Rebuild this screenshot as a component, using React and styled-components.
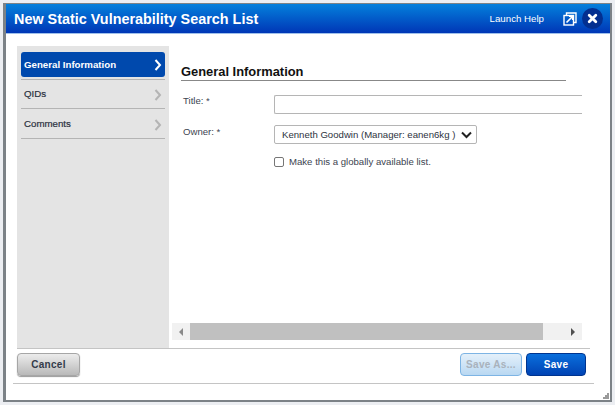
import React from 'react';
import styled, { createGlobalStyle } from 'styled-components';

const GlobalStyle = createGlobalStyle`
  html, body {
    margin: 0;
    padding: 0;
    background: #eceef2;
    font-family: "Liberation Sans", Arial, sans-serif;
  }
`;

const Page = styled.div`
  width: 615px;
  height: 405px;
  box-sizing: border-box;
  padding: 3px 0 0 3px;
  overflow: hidden;
`;

const Dialog = styled.div`
  position: relative;
  width: 609px;
  height: 399px;
  box-sizing: border-box;
  border: 2px solid #7c8287;
  border-top-width: 1px;
  border-left-width: 3px;
  background: #fff;
  display: flex;
  flex-direction: column;
`;

const Header = styled.div`
  height: 29px;
  flex: none;
  display: flex;
  align-items: center;
  padding: 0 7px 0 8px;
  color: #fff;
  background: linear-gradient(#0480dc, #0036b6);
  border-bottom: 1px solid #9fc0ea;
  box-sizing: content-box;
`;

const Title = styled.div`
  flex: 1;
  font-size: 14.4px;
  font-weight: bold;
`;

const HelpLink = styled.a`
  font-size: 9.7px;
  color: #fff;
  margin-right: 19px;
`;

const PopOut = styled.svg`
  width: 14px;
  height: 14px;
  margin-right: 5px;
`;

const CloseButton = styled.button`
  width: 21px;
  height: 21px;
  padding: 0;
  border: none;
  border-radius: 50%;
  background: #032f90;
  display: flex;
  align-items: center;
  justify-content: center;
`;

const Main = styled.div`
  display: flex;
  height: 302px;
  margin: 12px 20px 0 11px;
  border-bottom: 1px solid #c4c4c4;
  flex: none;
  width: 573px;
`;

const Sidebar = styled.nav`
  width: 152px;
  flex: none;
  box-sizing: border-box;
  background: #e4e4e4;
  padding: 6px 4px 0;
`;

const NavItem = styled.div`
  height: ${p => (p.$active ? '25px' : '28px')};
  margin-bottom: ${p => (p.$active ? '2px' : '0')};
  padding: ${p => (p.$active ? '0 4px 0 3px' : '0 4px 1px 3px')};
  box-sizing: border-box;
  border-radius: 3px;
  display: flex;
  align-items: center;
  justify-content: space-between;
  font-size: 9.7px;
  font-weight: ${p => (p.$active ? 'bold' : 'normal')};
  color: ${p => (p.$active ? '#fff' : '#2b3140')};
  background: ${p => (p.$active ? '#0049ad' : 'transparent')};
  -webkit-text-stroke: ${p => (p.$active ? '0' : '0.2px #2b3140')};
`;

const NavRule = styled.div`
  height: 1px;
  background: #b4b4b4;
  margin-bottom: ${p => p.$gap || 0}px;
`;

const Chevron = styled.svg`
  width: 8px;
  height: 12px;
  margin: ${p => p.$drop}px -1px 0 0;
`;

const Content = styled.div`
  flex: 1;
  min-width: 0;
  display: flex;
  flex-direction: column;
  padding: 0 0 8px 3px;
`;

const Form = styled.div`
  flex: 1;
  padding: 19px 0 0 9px;
`;

const Heading = styled.h2`
  width: 385px;
  margin: 0;
  font-size: 12.9px;
  font-weight: bold;
  line-height: 14px;
  padding-bottom: 1px;
  color: #111;
  border-bottom: 1px solid #888;
`;

const Row = styled.div`
  display: flex;
  align-items: flex-start;
  margin-top: ${p => p.$top}px;
  padding-left: 2px;
`;

const Label = styled.label`
  width: 91px;
  flex: none;
  font-size: 9.6px;
  line-height: 12px;
  padding-top: ${p => p.$pad || 0}px;
  color: #3d4450;
`;

const TextInput = styled.div`
  width: 308px;
  height: 19px;
  box-sizing: border-box;
  border: 1px solid #b5b5b5;
  border-right: none;
  border-radius: 2px 0 0 2px;
  background: #fff;
`;

const Select = styled.div`
  width: 203px;
  height: 19px;
  box-sizing: border-box;
  border: 1px solid #b5b5b5;
  border-radius: 2px;
  padding: 0 4px 0 7px;
  display: flex;
  align-items: center;
  justify-content: space-between;
  font-size: 9.6px;
  white-space: nowrap;
  color: #2d3340;
`;

const CheckRow = styled.div`
  display: flex;
  align-items: center;
  margin: 12px 0 0 93px;
  font-size: 9.6px;
  color: #3d4450;
`;

const CheckBox = styled.span`
  width: 10px;
  height: 10px;
  box-sizing: border-box;
  border: 1px solid #767676;
  border-radius: 2px;
  background: #fff;
  margin-right: 5px;
`;

const ScrollBar = styled.div`
  height: 17px;
  display: flex;
  align-items: center;
  background: #f1f1f1;
  width: 410px;
  flex: none;
`;

const ScrollButton = styled.div`
  width: 18px;
  flex: none;
  display: flex;
  align-items: center;
  justify-content: center;
`;

const ScrollTrack = styled.div`
  flex: 1;
  height: 100%;
`;

const ScrollThumb = styled.div`
  width: 353px;
  height: 100%;
  background: #c0c0c0;
`;

const Footer = styled.div`
  display: flex;
  align-items: center;
  width: 569px;
  margin: 4px 0 0 11px;
  height: 23px;
  flex: none;
`;

const Spacer = styled.div`
  flex: 1;
`;

const Btn = styled.button`
  width: ${p => p.$w}px;
  height: 23px;
  margin-left: ${p => p.$ml || 0}px;
  box-sizing: border-box;
  padding: 0;
  border-radius: 4px;
  font-family: "Liberation Sans", Arial, sans-serif;
  font-size: 10px;
  font-weight: bold;
  letter-spacing: 0.3px;
  ${p => p.$variant === 'primary' && `
    color: #fff;
    border: 1px solid #00348f;
    background: linear-gradient(#0a6fdc, #0043b4);
  `}
  ${p => p.$variant === 'disabled' && `
    color: #a9b2bc;
    border: 1px solid #7db4e4;
    background: linear-gradient(#e4f0fa, #b9d8f2);
  `}
  ${p => p.$variant === 'plain' && `
    color: #333b4a;
    border: 1px solid #a6a6a6;
    background: linear-gradient(#ececec, #b9b9b9);
    box-shadow: 0 1px 1px #999;
  `}
`;

const BottomRule = styled.div`
  height: 1px;
  width: 581px;
  margin: 7px 0 0 7px;
  background: #c4c4c4;
  flex: none;
`;

const Grip = styled.svg`
  position: absolute;
  right: 1px;
  bottom: 1px;
  width: 6px;
  height: 6px;
`;

const Triangle = ({ dir, color }) => (
  <svg width="6" height="8" viewBox="0 0 6 8">
    <path d={dir === 'left' ? 'M5 0 L1 4 L5 8Z' : 'M1 0 L5 4 L1 8Z'} fill={color} />
  </svg>
);

const Arrow = ({ color, drop = 0 }) => (
  <Chevron viewBox="0 0 8 12" $drop={drop}>
    <path d="M1.5 1 L6 6 L1.5 11" fill="none" stroke={color} strokeWidth="2" />
  </Chevron>
);

export default function App() {
  return (
    <Page>
      <GlobalStyle />
      <Dialog>
        <Header>
          <Title>New Static Vulnerability Search List</Title>
          <HelpLink>Launch Help</HelpLink>
          <PopOut viewBox="0 0 14 14">
            <path d="M3.5 3 V1 H13 V10.5 H10.5" fill="none" stroke="#fff" strokeWidth="1.4" />
            <rect x="1" y="3.5" width="9.5" height="9.5" fill="none" stroke="#fff" strokeWidth="1.4" />
            <path d="M3.5 10.5 L9.5 4.5 M6 4.3 H9.7 V8" fill="none" stroke="#fff" strokeWidth="1.6" />
          </PopOut>
          <CloseButton aria-label="Close">
            <svg width="11" height="11" viewBox="0 0 11 11">
              <path d="M2.2 2.2 L8.8 8.8 M8.8 2.2 L2.2 8.8" stroke="#fff" strokeWidth="2.8" strokeLinecap="round" />
            </svg>
          </CloseButton>
        </Header>
        <Main>
          <Sidebar>
            <NavItem $active>
              General Information
              <Arrow color="#fff" />
            </NavItem>
            <NavRule />
            <NavItem>
              QIDs
              <Arrow color="#b4b4b4" drop={2} />
            </NavItem>
            <NavRule $gap={1} />
            <NavItem>
              Comments
              <Arrow color="#b4b4b4" drop={2} />
            </NavItem>
            <NavRule />
          </Sidebar>
          <Content>
            <Form>
              <Heading>General Information</Heading>
              <Row $top={14}>
                <Label>Title: *</Label>
                <TextInput />
              </Row>
              <Row $top={11}>
                <Label $pad={1}>Owner: *</Label>
                <Select>
                  Kenneth Goodwin (Manager: eanen6kg )
                  <svg width="11" height="8" viewBox="0 0 11 8">
                    <path d="M1 1.5 L5.5 6 L10 1.5" fill="none" stroke="#222" strokeWidth="2" />
                  </svg>
                </Select>
              </Row>
              <CheckRow>
                <CheckBox />
                Make this a globally available list.
              </CheckRow>
            </Form>
            <ScrollBar>
              <ScrollButton>
                <Triangle dir="left" color="#8a8a8a" />
              </ScrollButton>
              <ScrollTrack>
                <ScrollThumb />
              </ScrollTrack>
              <ScrollButton>
                <Triangle dir="right" color="#505050" />
              </ScrollButton>
            </ScrollBar>
          </Content>
        </Main>
        <Footer>
          <Btn $w={63} $variant="plain">Cancel</Btn>
          <Spacer />
          <Btn $w={62} $variant="disabled">Save As...</Btn>
          <Btn $w={60} $ml={4} $variant="primary">Save</Btn>
        </Footer>
        <BottomRule />
        <Grip viewBox="0 0 6 6">
          <path d="M4 0h2v2H4zM2 2h2v2H2zM4 2h2v2H4zM0 4h2v2H0zM2 4h2v2H2zM4 4h2v2H4z" fill="#9a9a9a" />
        </Grip>
      </Dialog>
    </Page>
  );
}
